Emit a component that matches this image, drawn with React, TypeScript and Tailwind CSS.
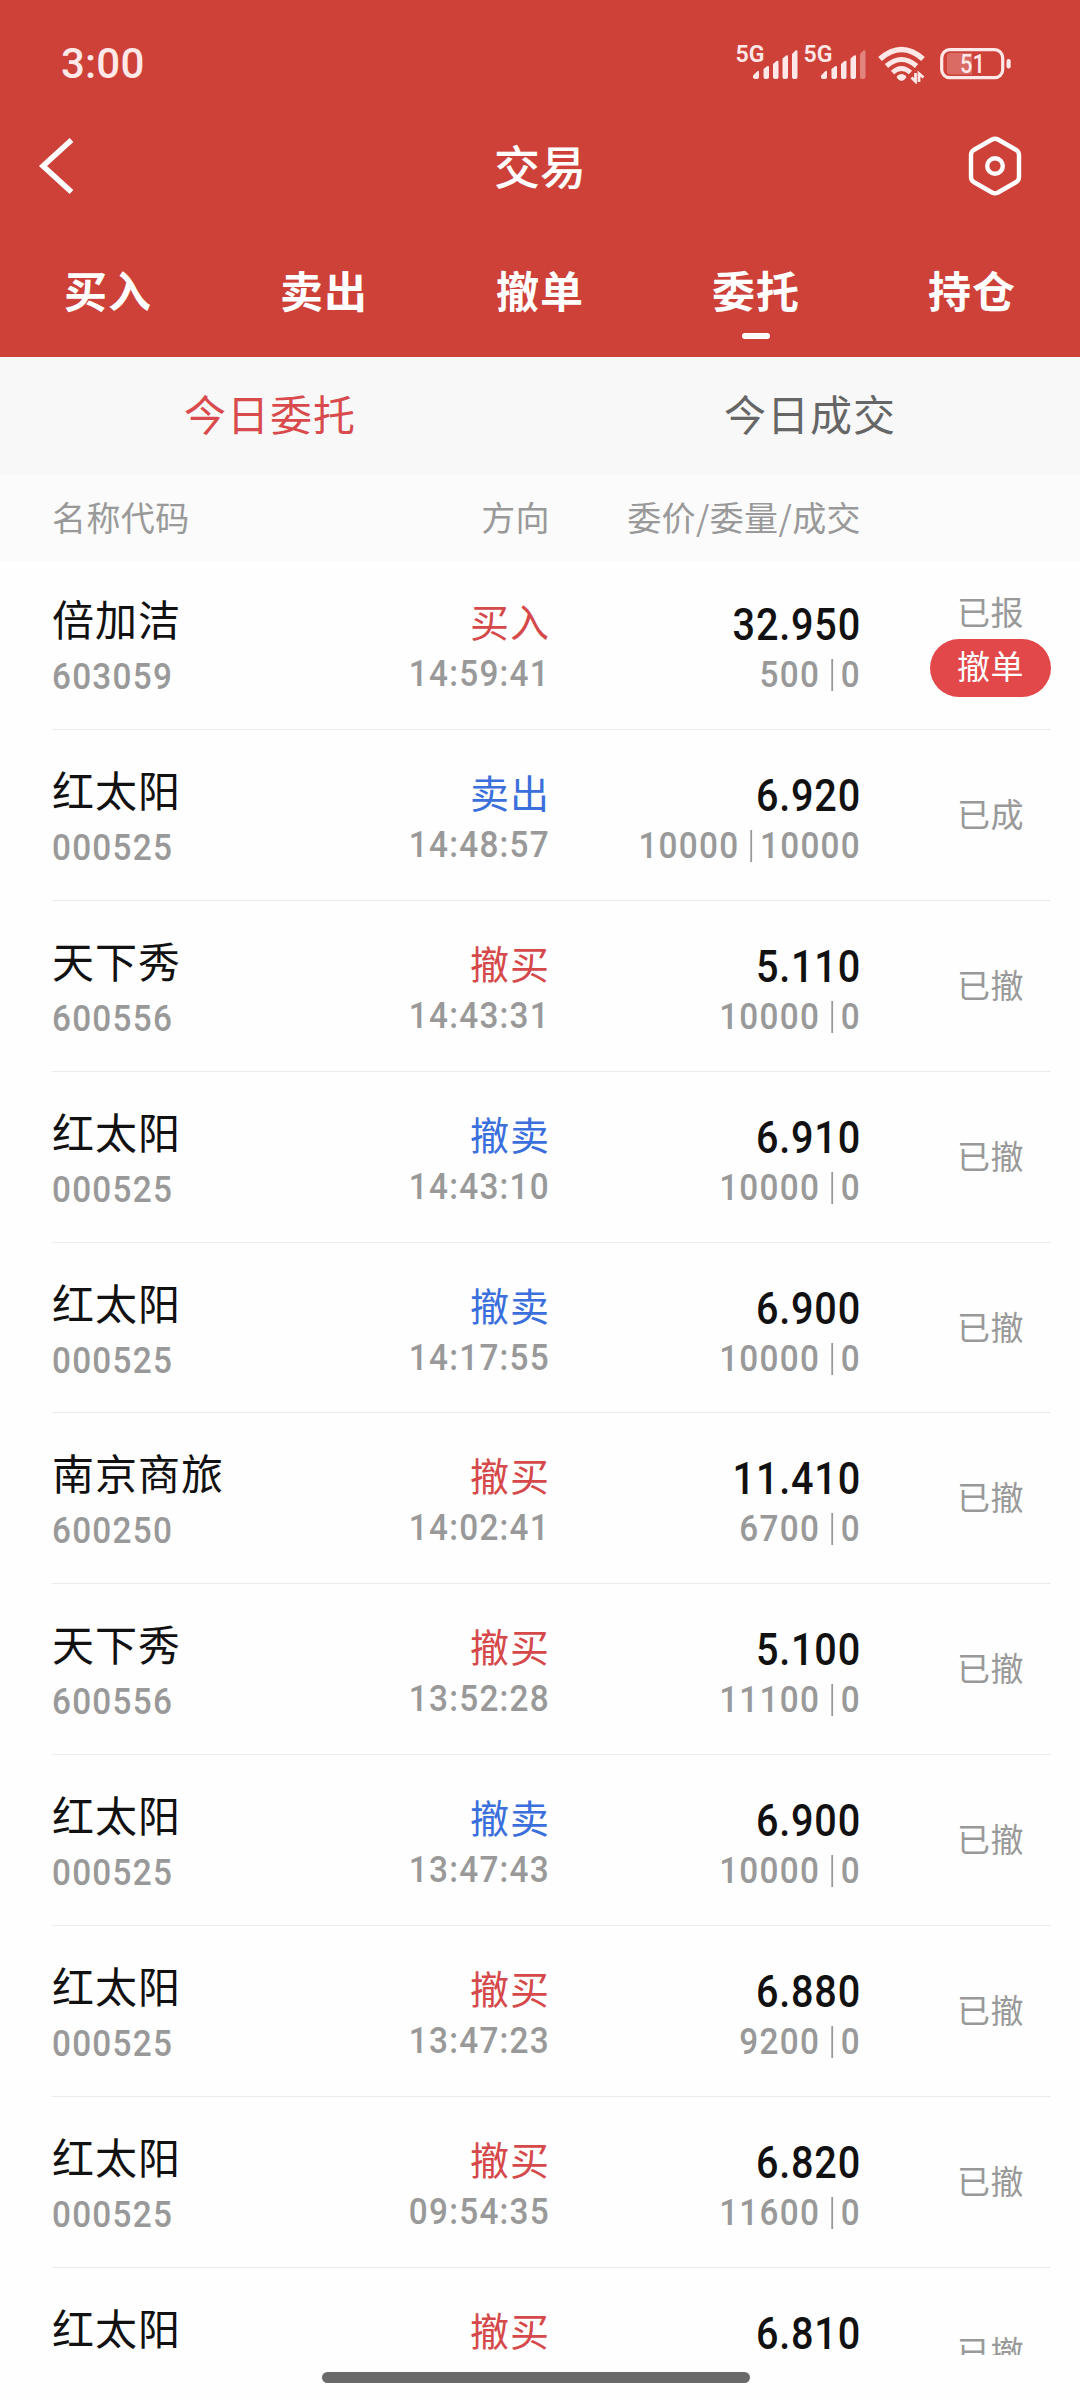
type Side = "buy" | "sell";

type Order = {
  name: string;
  code?: string;
  action: string;
  side: Side;
  time?: string;
  price: string;
  amount?: string;
  filled?: string;
  status: string;
  cancelable?: boolean;
};

const tabs = ["买入", "卖出", "撤单", "委托", "持仓"];
const activeTab = "委托";

const orders: Order[] = [
  { name: "倍加洁", code: "603059", action: "买入", side: "buy", time: "14:59:41", price: "32.950", amount: "500", filled: "0", status: "已报", cancelable: true },
  { name: "红太阳", code: "000525", action: "卖出", side: "sell", time: "14:48:57", price: "6.920", amount: "10000", filled: "10000", status: "已成" },
  { name: "天下秀", code: "600556", action: "撤买", side: "buy", time: "14:43:31", price: "5.110", amount: "10000", filled: "0", status: "已撤" },
  { name: "红太阳", code: "000525", action: "撤卖", side: "sell", time: "14:43:10", price: "6.910", amount: "10000", filled: "0", status: "已撤" },
  { name: "红太阳", code: "000525", action: "撤卖", side: "sell", time: "14:17:55", price: "6.900", amount: "10000", filled: "0", status: "已撤" },
  { name: "南京商旅", code: "600250", action: "撤买", side: "buy", time: "14:02:41", price: "11.410", amount: "6700", filled: "0", status: "已撤" },
  { name: "天下秀", code: "600556", action: "撤买", side: "buy", time: "13:52:28", price: "5.100", amount: "11100", filled: "0", status: "已撤" },
  { name: "红太阳", code: "000525", action: "撤卖", side: "sell", time: "13:47:43", price: "6.900", amount: "10000", filled: "0", status: "已撤" },
  { name: "红太阳", code: "000525", action: "撤买", side: "buy", time: "13:47:23", price: "6.880", amount: "9200", filled: "0", status: "已撤" },
  { name: "红太阳", code: "000525", action: "撤买", side: "buy", time: "09:54:35", price: "6.820", amount: "11600", filled: "0", status: "已撤" },
  { name: "红太阳", action: "撤买", side: "buy", price: "6.810", status: "已撤" },
];

function Signal({ weak = false }: { weak?: boolean }) {
  return (
    <svg width="68" height="40" viewBox="0 0 68 40" fill="currentColor">
      <text x="1.500" y="21.700" fontSize="23" fontWeight="600" textLength="29" lengthAdjust="spacingAndGlyphs" className="font-['Roboto',sans-serif]">
        5G
      </text>
      <path d="M19 35.500 23.500 31q1.500-.8 1.500 1v5q0 2-2 2h-2q-2 0-2-2Z" />
      <path d="M29.500 29 33 26.300q2-1 2 1V37q0 2-2 2h-1.500q-2 0-2-2Z" />
      <path d="M39 24 42.500 21q2-1 2 1v15q0 2-2 2H41q-2 0-2-2Z" />
      <path d="M48.500 18.500 52 15.500q2-1 2 1V37q0 2-2 2h-1.500q-2 0-2-2Z" />
      <path d="M58 14 61.500 10.500q2-1 2 1V37q0 2-2 2H60q-2 0-2-2Z" opacity={weak ? 0.4 : 1} />
    </svg>
  );
}

function Wifi() {
  return (
    <svg width="48" height="38" viewBox="0 0 48 38" fill="none" stroke="currentColor">
      <path d="M2 13Q23.500-6 45 13" strokeWidth="5.500" />
      <path d="M8.500 20Q23.500 7 38.500 20" strokeWidth="5" />
      <path d="M14.500 26.500Q23.500 18.500 32.500 26.500" strokeWidth="4.800" />
      <path d="M19 30q4.500-4 9 0l.3 1.500q-4.800 7-9.600 0Z" fill="currentColor" stroke="none" />
      <path d="M37.500 27v8.500l-4-4M41 36v-8.500l4.500 4" strokeWidth="2.800" />
    </svg>
  );
}

function Battery() {
  return (
    <svg width="72" height="34" viewBox="0 0 72 34" fill="currentColor">
      <rect x="1.700" y="1.700" width="61" height="28" rx="8" fill="none" stroke="currentColor" strokeWidth="3.200" />
      <path d="M10 5h22v21.500H10q-3 0-3-3V8q0-3 3-3Z" opacity="0.25" />
      <rect x="66.500" y="11" width="4.200" height="9.500" rx="2" />
      <text x="20" y="25" fontSize="26" fontWeight="500" textLength="25" lengthAdjust="spacingAndGlyphs" className="font-['Roboto',sans-serif]">
        51
      </text>
    </svg>
  );
}

function StatusBar() {
  return (
    <div className="flex h-[104px] items-start justify-between pr-[68px] pl-[61px] text-[#ffe8e7]">
      <span className="mt-[40px] font-['Roboto',sans-serif] text-[42px] leading-[48px] font-medium tracking-[0.2px]">3:00</span>
      <div className="mt-[40px] flex">
        <Signal />
        <Signal weak />
        <div className="mt-[6px] ml-[8px]">
          <Wifi />
        </div>
        <div className="mt-[8px] ml-[14px]">
          <Battery />
        </div>
      </div>
    </div>
  );
}

function TitleBar() {
  return (
    <div className="flex h-[124px] items-center justify-between pr-[54px] pl-[36px]">
      <svg width="62" height="62" viewBox="0 0 62 62" fill="none" stroke="currentColor" strokeWidth="5.500">
        <path d="M35.500 5 7 31l28.500 26" />
      </svg>
      <h1 className="pb-[5px] pl-[18px] text-[46px] leading-[60px] font-medium">交易</h1>
      <svg width="62" height="62" viewBox="0 0 62 62" fill="none" stroke="currentColor" strokeWidth="4.400" strokeLinejoin="round">
        <path d="M28 4.500q3-1.600 6 0L52.300 15q2.700 1.800 2.700 5v22q0 3.200-2.700 5L34 57.500q-3 1.600-6 0L9.700 47Q7 45.200 7 42V20q0-3.200 2.700-5Z" />
        <circle cx="31" cy="31" r="7.800" />
      </svg>
    </div>
  );
}

function TabBar() {
  return (
    <nav className="grid h-[129px] grid-cols-5">
      {tabs.map((tab) => (
        <div key={tab} className="flex flex-col items-center pt-[31px]">
          <span className="text-[43px] leading-[60px] font-bold tracking-[1px]">{tab}</span>
          {tab === activeTab && <span className="mt-[14px] h-[6px] w-[28px] rounded-full bg-white" />}
        </div>
      ))}
    </nav>
  );
}

function OrderRow({ order }: { order: Order }) {
  return (
    <li className="flex h-[170.9px] shrink-0 border-b border-[#ebebeb]">
      <div className="w-[240px] pt-[29px]">
        <p className="text-[42px] leading-[60px] tracking-[1px] text-[#111]">{order.name}</p>
        {order.code && (
          <p className="origin-left scale-x-90 font-['Roboto',sans-serif] text-[37px] leading-[58px] font-medium tracking-[1.4px] text-[#999]">
            {order.code}
          </p>
        )}
      </div>
      <div className="w-[258px] pt-[34px] text-right">
        <p className={`text-[39px] leading-[54px] tracking-[1px] ${order.side === "buy" ? "text-[#d5494b]" : "text-[#3a6fdc]"}`}>
          {order.action}
        </p>
        {order.time && (
          <p className="origin-right scale-x-90 font-['Roboto',sans-serif] text-[37px] leading-[54px] font-medium tracking-[1.4px] text-[#999]">
            {order.time}
          </p>
        )}
      </div>
      <div className="w-[311px] origin-right scale-x-90 pt-[41px] font-['Roboto',sans-serif] font-medium">
        <p className="text-right text-[44px] leading-[50px] tracking-[0.9px] text-[#111]">{order.price}</p>
        {order.amount && (
          <p className="flex items-center justify-end text-[37px] leading-[50px] tracking-[1.4px] text-[#999]">
            {order.amount}
            <span className="mr-[9px] ml-[12px] h-[32px] w-[2px] bg-[#999]" />
            {order.filled}
          </p>
        )}
      </div>
      <div className="ml-[69px] flex w-[121px] flex-col items-center justify-center pb-[4px]">
        <p className="text-[33px] leading-[48px] tracking-[0.4px] text-[#999]">{order.status}</p>
        {order.cancelable && (
          <button className="mt-[4px] h-[58px] w-full rounded-full bg-[#e2484a] pb-[5px] text-[33px] leading-[53px] tracking-[0.4px] text-white">
            撤单
          </button>
        )}
      </div>
    </li>
  );
}

export default function App() {
  return (
    <div className="flex h-[2400px] w-[1080px] flex-col overflow-hidden bg-[#fefefe] font-['Noto_Sans_CJK_SC',sans-serif]">
      <header className="h-[357px] bg-[#cd4139] text-white">
        <StatusBar />
        <TitleBar />
        <TabBar />
      </header>

      <div className="grid h-[118px] grid-cols-2 bg-[#f8f8f8] pt-[26px] text-center text-[42px] leading-[60px] tracking-[1px]">
        <span className="text-[#d94a4c]">今日委托</span>
        <span className="text-[#666]">今日成交</span>
      </div>

      <div className="flex h-[86px] bg-[#fbfbfb] pt-[16px] pl-[52px] text-[34px] leading-[52px] tracking-[0.4px] text-[#999]">
        <span className="w-[240px]">名称代码</span>
        <span className="w-[258px] text-right">方向</span>
        <span className="w-[311px] text-right">委价/委量/成交</span>
      </div>

      {/* the last order runs under the gesture area */}
      <ul className="-mt-[2px] flex h-[1796px] flex-col overflow-hidden pr-[29px] pl-[52px]">
        {orders.map((order, i) => (
          <OrderRow key={i} order={order} />
        ))}
      </ul>

      <div className="mx-auto mt-[17px] h-[11px] w-[428px] -translate-x-[4px] rounded-full bg-[#6a6a6a]" />
    </div>
  );
}
